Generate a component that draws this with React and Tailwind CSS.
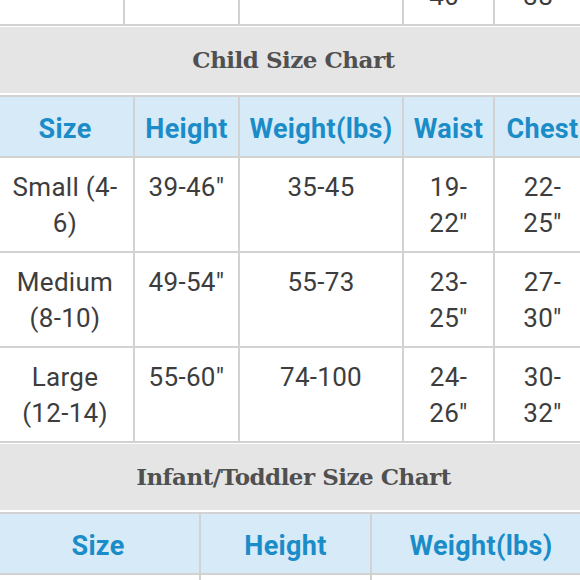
import React from "react";

const border = "border-[#d2d2d2]";

const childRows = [
  { size: ["Small (4-", "6)"], height: "39-46\"", weight: "35-45", waist: ["19-", "22\""], chest: ["22-", "25\""] },
  { size: ["Medium", "(8-10)"], height: "49-54\"", weight: "55-73", waist: ["23-", "25\""], chest: ["27-", "30\""] },
  { size: ["Large", "(12-14)"], height: "55-60\"", weight: "74-100", waist: ["24-", "26\""], chest: ["30-", "32\""] },
];

const Lines = ({ lines }) =>
  lines.map((l, i) => (
    <React.Fragment key={i}>
      {l}
      {i < lines.length - 1 && <br />}
    </React.Fragment>
  ));

const Title = ({ children }) => (
  <div className="mt-px mb-[2px] h-[66px] bg-[#e5e5e5] flex items-center justify-center">
    <span
      className="text-[23px] font-bold text-[#505050] tracking-[-0.5px]"
      style={{ fontFamily: '"DejaVu Serif", serif' }}
    >
      {children}
    </span>
  </div>
);

const HeadCell = ({ children, last }) => (
  <div className={`h-[59px] flex items-center justify-center pt-[4px] bg-[#d7eaf7] text-[#1a8cc8] text-[27px] font-bold ${last ? "" : "border-r-2"} ${border}`}>
    {children}
  </div>
);

const Cell = ({ children, last }) => (
  <div className={`h-[93px] pt-[11px] text-center ${last ? "" : "border-r-2"} ${border}`}>
    {children}
  </div>
);

// only the bottom edge of the last line of the previous table peeks in
const TailCell = ({ children, last }) => (
  <div className={`h-[24px] overflow-hidden text-center ${last ? "" : "border-r-2"} ${border}`}>
    <div className="-mt-[22px]">{children}</div>
  </div>
);

export default function App() {
  return (
    <div
      className="w-[580px] h-[580px] overflow-hidden bg-white text-[26px] leading-[36px] tracking-[0.3px] text-[#3d3d3d]"
      style={{ fontFamily: "Roboto, 'Liberation Sans', sans-serif" }}
    >
      <div className="ml-[-3px] w-[593px]">
        {/* tail of the previous table */}
        <div className={`grid grid-cols-[128px_115px_164px_91px_95px] border-b-2 ${border}`}>
          <TailCell />
          <TailCell />
          <TailCell />
          <TailCell>40"</TailCell>
          <TailCell last>38"</TailCell>
        </div>

        <Title>Child Size Chart</Title>

        <div className={`border-t-2 ${border}`}>
          <div className={`grid grid-cols-[138px_105px_164px_91px_95px] border-b-2 ${border}`}>
            <HeadCell>Size</HeadCell>
            <HeadCell>Height</HeadCell>
            <HeadCell>Weight(lbs)</HeadCell>
            <HeadCell>Waist</HeadCell>
            <HeadCell last>Chest</HeadCell>
          </div>
          {childRows.map((r) => (
            <div key={r.height} className={`grid grid-cols-[138px_105px_164px_91px_95px] border-b-2 ${border}`}>
              <Cell><Lines lines={r.size} /></Cell>
              <Cell>{r.height}</Cell>
              <Cell>{r.weight}</Cell>
              <Cell><Lines lines={r.waist} /></Cell>
              <Cell last><Lines lines={r.chest} /></Cell>
            </div>
          ))}
        </div>

        <Title>Infant/Toddler Size Chart</Title>

        <div className={`border-t-2 ${border}`}>
          <div className={`grid grid-cols-[204px_171px_218px] border-b-2 ${border}`}>
            <HeadCell>Size</HeadCell>
            <HeadCell>Height</HeadCell>
            <HeadCell last>Weight(lbs)</HeadCell>
          </div>
          <div className="grid grid-cols-[204px_171px_218px]">
            <Cell />
            <Cell />
            <Cell last />
          </div>
        </div>
      </div>
    </div>
  );
}
